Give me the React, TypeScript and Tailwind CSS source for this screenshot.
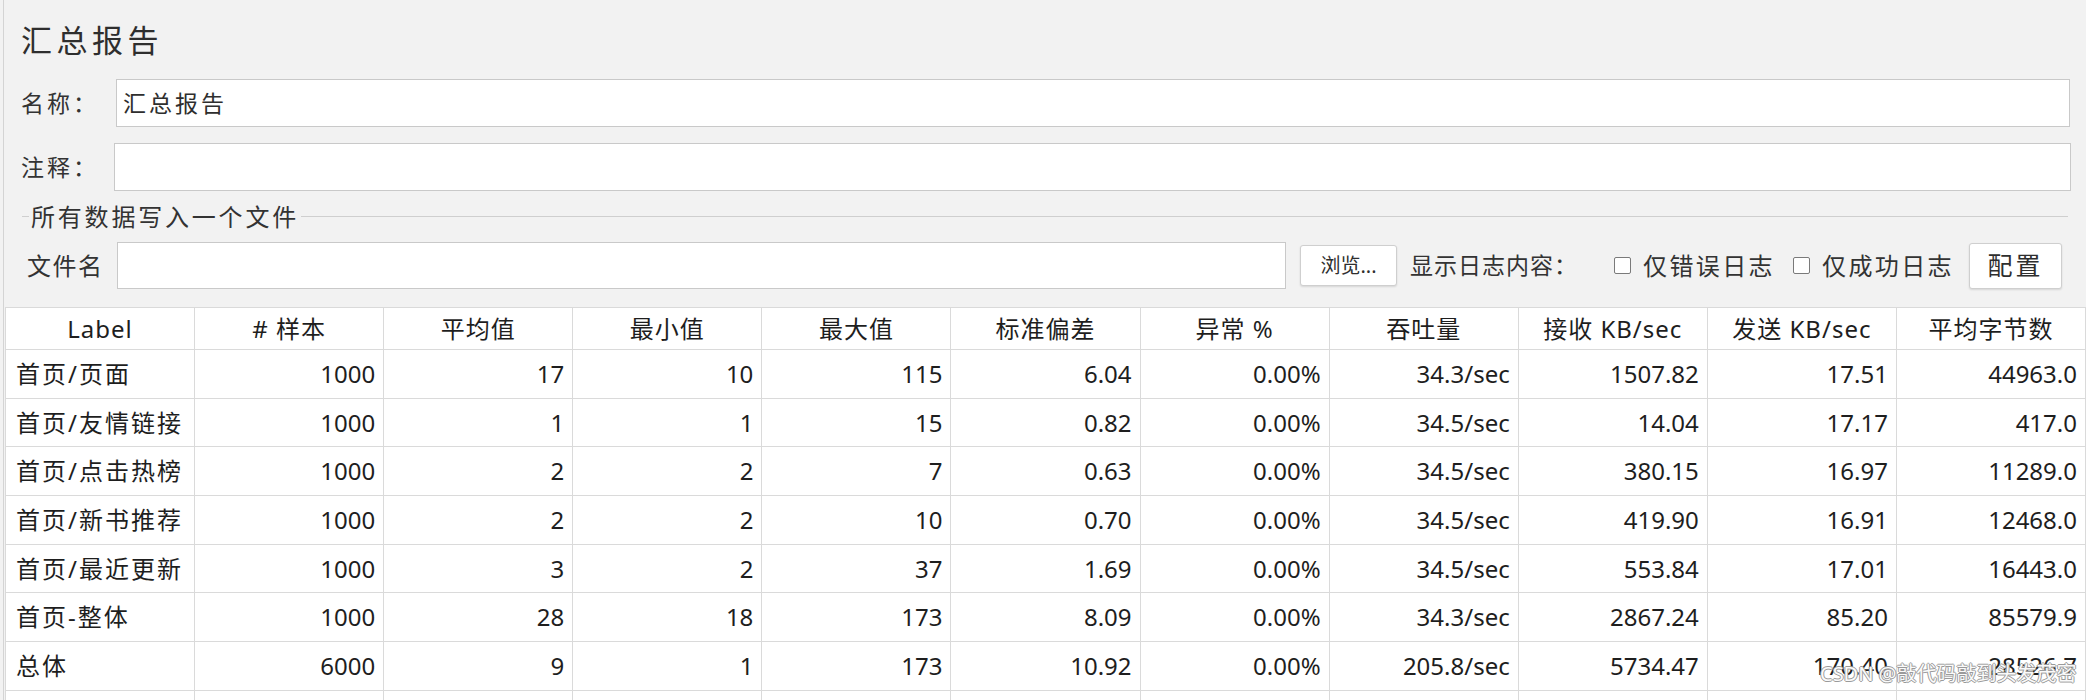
import React from "react";

const headers = ["Label", "# 样本", "平均值", "最小值", "最大值", "标准偏差", "异常 %", "吞吐量", "接收 KB/sec", "发送 KB/sec", "平均字节数"];

const rows: string[][] = [
  ["首页/页面", "1000", "17", "10", "115", "6.04", "0.00%", "34.3/sec", "1507.82", "17.51", "44963.0"],
  ["首页/友情链接", "1000", "1", "1", "15", "0.82", "0.00%", "34.5/sec", "14.04", "17.17", "417.0"],
  ["首页/点击热榜", "1000", "2", "2", "7", "0.63", "0.00%", "34.5/sec", "380.15", "16.97", "11289.0"],
  ["首页/新书推荐", "1000", "2", "2", "10", "0.70", "0.00%", "34.5/sec", "419.90", "16.91", "12468.0"],
  ["首页/最近更新", "1000", "3", "2", "37", "1.69", "0.00%", "34.5/sec", "553.84", "17.01", "16443.0"],
  ["首页-整体", "1000", "28", "18", "173", "8.09", "0.00%", "34.3/sec", "2867.24", "85.20", "85579.9"],
  ["总体", "6000", "9", "1", "173", "10.92", "0.00%", "205.8/sec", "5734.47", "170.40", "28526.7"],
  ["", "", "", "", "", "", "", "", "", "", ""],
];

function Checkbox() {
  return <span className="inline-block w-[17px] h-[17px] bg-white border border-[#7a7a7a] rounded-[2px] shrink-0" />;
}

export default function App() {
  return (
    <div className="w-[2086px] h-[700px] overflow-hidden bg-[#f2f2f2] relative font-['Noto_Sans','Noto_Sans_CJK_SC',sans-serif] text-[#333333]">
      <div className="ml-[3px] h-full border-l border-[#d4d4d4]">
        {/* Title */}
        <div className="h-[72px] pt-[8px] pl-[17px] flex items-center">
          <span className="text-[31px] leading-none tracking-[4.5px] text-[#2e2e2e]">汇总报告</span>
        </div>

        {/* Name */}
        <div className="mt-[7px] h-[48px] pl-[17px] pr-[16px] flex items-center">
          <span className="w-[95px] shrink-0 text-[23px] tracking-[3px] leading-none">名称：</span>
          <div className="flex-1 h-full bg-white border border-[#c9c9c9] flex items-center pl-[6px]">
            <span className="text-[23px] tracking-[3px] leading-none text-[#2e2e2e]">汇总报告</span>
          </div>
        </div>

        {/* Comment */}
        <div className="mt-[16px] h-[48px] pl-[17px] pr-[15px] flex items-center">
          <span className="w-[93px] shrink-0 text-[23px] tracking-[3px] leading-none">注释：</span>
          <div className="flex-1 h-full bg-white border border-[#c9c9c9]" />
        </div>

        {/* Section */}
        <div className="h-[51px] pl-[18px] pr-[18px] flex items-center">
          <div className="w-[7px] h-px bg-[#cfcfcf]" />
          <span className="px-[2px] text-[24px] tracking-[2.8px] leading-none">所有数据写入一个文件</span>
          <div className="flex-1 h-px bg-[#cfcfcf]" />
        </div>

        {/* File row */}
        <div className="h-[47px] pl-[23px] flex items-center">
          <span className="w-[90px] shrink-0 text-[24px] tracking-[1.5px] leading-none">文件名</span>
          <div className="w-[1169px] h-[47px] bg-white border border-[#c9c9c9] shrink-0" />
          <button className="ml-[14px] w-[97px] h-[41px] shrink-0 bg-white border border-[#cfcfcf] rounded-[3px] shadow-[0_1px_2px_rgba(0,0,0,0.12)] text-[20px] leading-none text-[#2e2e2e] flex items-center justify-center">
            浏览...
          </button>
          <span className="ml-[13px] w-[204px] shrink-0 text-[23px] tracking-[1px] leading-none">显示日志内容：</span>
          <Checkbox />
          <span className="ml-[12px] w-[150px] shrink-0 text-[24px] tracking-[2.4px] leading-none">仅错误日志</span>
          <Checkbox />
          <span className="ml-[12px] w-[147px] shrink-0 text-[24px] tracking-[2.4px] leading-none">仅成功日志</span>
          <button className="w-[93px] h-[46px] shrink-0 bg-white border border-[#cfcfcf] rounded-[3px] shadow-[0_1px_2px_rgba(0,0,0,0.12)] text-[25px] tracking-[3px] leading-none text-[#2e2e2e] flex items-center justify-center">
            配置
          </button>
        </div>

        {/* Table */}
        <div className="mt-[18px] ml-px w-[2081px] bg-white border-t border-l border-[#dadada] text-[#1e1e1e]">
          <div className="grid grid-cols-11 h-[42px]">
            {headers.map((h, i) => (
              <div key={i} className="border-r border-b border-[#dadada] flex items-center justify-center text-[24px] leading-none tracking-[1px] whitespace-nowrap">
                {h}
              </div>
            ))}
          </div>
          {rows.map((r, ri) => (
            <div key={ri} className="grid grid-cols-11 h-[48.7px]">
              {r.map((c, ci) => (
                <div
                  key={ci}
                  className={
                    ci === 0
                      ? "border-r border-b border-[#dadada] flex items-center pl-[10px] text-[24px] leading-none tracking-[2px] whitespace-nowrap"
                      : "border-r border-b border-[#dadada] flex items-center justify-end pr-[8px] text-[24px] leading-none whitespace-nowrap"
                  }
                >
                  {c}
                </div>
              ))}
            </div>
          ))}
        </div>
      </div>

      <div className="absolute left-[1820px] top-[664px] text-[20px] leading-none text-[#fafafa] [text-shadow:1px_0_0_#9a9a9a,-1px_0_0_#9a9a9a,0_1px_0_#9a9a9a,0_-1px_0_#9a9a9a] whitespace-nowrap">
        CSDN @敲代码敲到头发茂密
      </div>
    </div>
  );
}
